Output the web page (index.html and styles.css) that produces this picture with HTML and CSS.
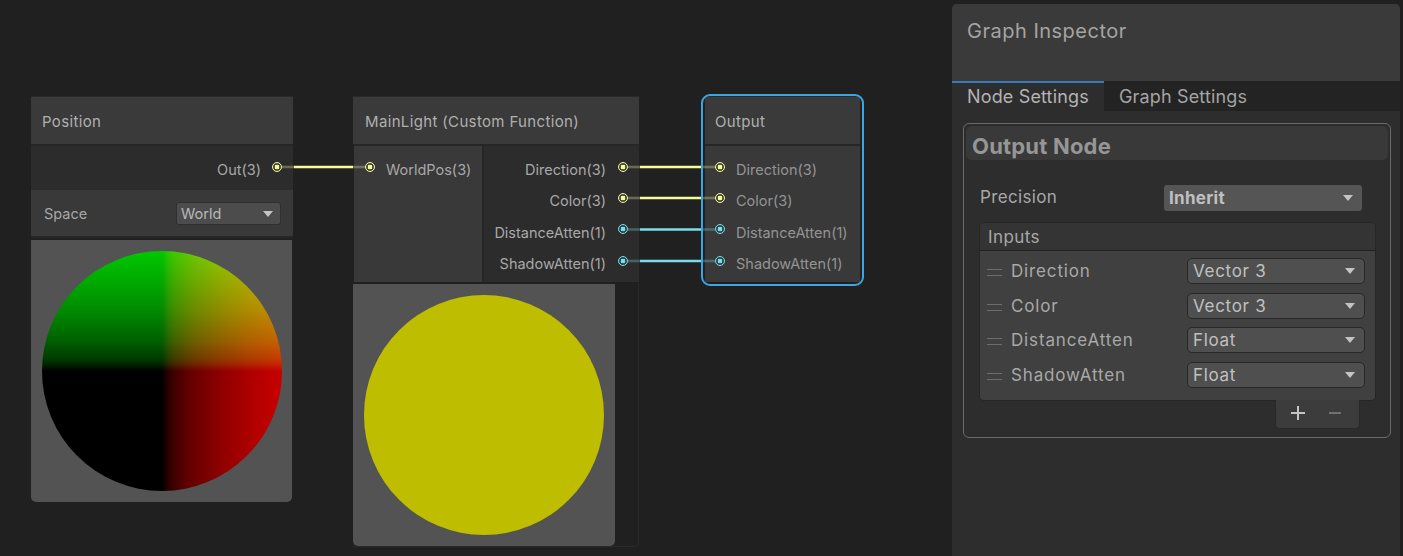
FILE: index.html
```html
<!DOCTYPE html>
<html lang="en">
<head>
    <meta charset="UTF-8">
    <title>Shader Graph</title>
    <link rel="stylesheet" href="styles.css">
</head>
<body>
    <div class="graph">
        <svg class="wires" width="952" height="556">
            <g class="wire-vec3">
                <line class="tail" x1="282" y1="167" x2="294" y2="167"/>
                <line x1="294" y1="167" x2="353" y2="167"/>
                <line class="tail" x1="353" y1="167" x2="365" y2="167"/>
                <line class="tail" x1="628" y1="167" x2="640" y2="167"/>
                <line x1="640" y1="167" x2="702" y2="167"/>
                <line class="tail" x1="702" y1="167" x2="715" y2="167"/>
                <line class="tail" x1="628" y1="198" x2="640" y2="198"/>
                <line x1="640" y1="198" x2="702" y2="198"/>
                <line class="tail" x1="702" y1="198" x2="715" y2="198"/>
            </g>
            <g class="wire-float">
                <line class="tail" x1="628" y1="229.500" x2="640" y2="229.500"/>
                <line x1="640" y1="229.500" x2="702" y2="229.500"/>
                <line class="tail" x1="702" y1="229.500" x2="715" y2="229.500"/>
                <line class="tail" x1="628" y1="261" x2="640" y2="261"/>
                <line x1="640" y1="261" x2="702" y2="261"/>
                <line class="tail" x1="702" y1="261" x2="715" y2="261"/>
            </g>
        </svg>

        <div class="node node-position">
            <div class="node-title">Position</div>
            <div class="node-ports out-only">
                <div class="ports-out">
                    <div class="port-row"><span>Out(3)</span><i class="port vec3"></i></div>
                </div>
            </div>
            <div class="node-control">
                <span>Space</span>
                <div class="node-select">World<i class="arrow"></i></div>
            </div>
            <div class="preview"><div class="ball ball-position"></div></div>
        </div>

        <div class="node node-main">
            <div class="node-title">MainLight (Custom Function)</div>
            <div class="node-ports">
                <div class="ports-in">
                    <div class="port-row"><i class="port vec3"></i><span>WorldPos(3)</span></div>
                </div>
                <div class="ports-out">
                    <div class="port-row"><span>Direction(3)</span><i class="port vec3"></i></div>
                    <div class="port-row"><span>Color(3)</span><i class="port vec3"></i></div>
                    <div class="port-row"><span>DistanceAtten(1)</span><i class="port float"></i></div>
                    <div class="port-row"><span>ShadowAtten(1)</span><i class="port float"></i></div>
                </div>
            </div>
            <div class="preview-wrap">
                <div class="preview"><div class="ball ball-color"></div></div>
            </div>
        </div>

        <div class="node node-output">
            <div class="node-title">Output</div>
            <div class="node-ports">
                <div class="ports-in">
                    <div class="port-row"><i class="port vec3"></i><span>Direction(3)</span></div>
                    <div class="port-row"><i class="port vec3"></i><span>Color(3)</span></div>
                    <div class="port-row"><i class="port float"></i><span>DistanceAtten(1)</span></div>
                    <div class="port-row"><i class="port float"></i><span>ShadowAtten(1)</span></div>
                </div>
            </div>
        </div>
    </div>

    <div class="inspector">
        <div class="inspector-title">Graph Inspector</div>
        <div class="tabs">
            <div class="tab active">Node Settings</div>
            <div class="tab">Graph Settings</div>
        </div>
        <div class="inspector-body">
            <div class="settings-box">
                <div class="settings-head">Output Node</div>
                <div class="precision">
                    <span>Precision</span>
                    <div class="select select-bold">Inherit<i class="arrow"></i></div>
                </div>
                <div class="list">
                    <div class="list-head">Inputs</div>
                    <div class="list-rows">
                        <div class="list-row">
                            <i class="handle"></i><span>Direction</span>
                            <div class="select">Vector 3<i class="arrow"></i></div>
                        </div>
                        <div class="list-row">
                            <i class="handle"></i><span>Color</span>
                            <div class="select">Vector 3<i class="arrow"></i></div>
                        </div>
                        <div class="list-row">
                            <i class="handle"></i><span>DistanceAtten</span>
                            <div class="select">Float<i class="arrow"></i></div>
                        </div>
                        <div class="list-row">
                            <i class="handle"></i><span>ShadowAtten</span>
                            <div class="select">Float<i class="arrow"></i></div>
                        </div>
                    </div>
                </div>
                <div class="list-footer">
                    <svg width="16" height="16" viewBox="0 0 16 16"><path class="icon-plus" d="M8 1v14M1 8h14"/></svg>
                    <svg width="12" height="16" viewBox="0 0 12 16"><path class="icon-minus" d="M0 8h12"/></svg>
                </div>
            </div>
        </div>
    </div>
</body>
</html>
```

FILE: styles.css
```css
body {
    margin: 0;
    width: 1403px;
    height: 556px;
    overflow: hidden;
    display: flex;
    background-color: #202020;
    font-family: Inter, "Noto Sans", sans-serif;
    color: #a8a8a8;
}

/* graph canvas */
.graph {
    position: relative;
    width: 952px;
    height: 556px;
    flex: none;
}

.wires {
    position: absolute;
    top: 0;
    left: 0;
    z-index: 2;
    pointer-events: none;
}

.wires line {
    stroke-width: 2.6;
}

.wires .tail {
    opacity: 0.3;
}

.wire-vec3 line {
    stroke: #f4fb9b;
}

.wire-float line {
    stroke: #7adcec;
}

.node {
    position: absolute;
    font-size: 14.5px;
}

.node-position {
    left: 31px;
    top: 97px;
    width: 262px;
}

.node-main {
    left: 353px;
    top: 97px;
    width: 286px;
}

.node-output {
    left: 705px;
    top: 97px;
    width: 155px;
    color: #949494;
}

.node-output::after {
    content: "";
    position: absolute;
    top: -3px;
    left: -4px;
    right: -4px;
    bottom: -4px;
    border: 2px solid #3ca5e2;
    border-radius: 9px;
    z-index: 3;
}

.node-title {
    height: 47px;
    line-height: 49px;
    padding-left: 11px;
    background-color: #3a3a3a;
    border-bottom: 2px solid #262626;
    box-shadow: 0 -1px 0 #2a2a2a;
    font-size: 15px;
    letter-spacing: 0.35px;
    color: #b0b0b0;
}

.node-main .node-title {
    padding-left: 12px;
}

.node-output .node-title {
    padding-left: 10px;
}

.node-ports {
    display: flex;
    height: 136px;
}

.out-only {
    height: 44px;
}

.ports-in {
    flex: 1;
    padding: 8px 0 0 12px;
    background-color: #393939;
}

.ports-out {
    flex: 1;
    padding: 8px 11px 0 0;
    background-color: #2c2c2c;
}

.node-main .ports-in {
    flex: none;
    width: 117px;
    padding-left: 11px;
    border-left: 1px solid #202020;
    border-right: 2px solid #262626;
}

.node-output .ports-in {
    padding-left: 10px;
}

.port-row {
    height: 31.33px;
    display: flex;
    align-items: center;
    gap: 11px;
    white-space: nowrap;
}

.ports-out .port-row {
    justify-content: flex-end;
    gap: 12px;
}

.node-position .port-row {
    gap: 11px;
}

.port {
    width: 10px;
    height: 10px;
    flex: none;
    box-sizing: border-box;
    border-radius: 50%;
    margin-bottom: 6px;
}

.port.vec3 {
    border: 1.4px solid #f4fb9b;
    background: radial-gradient(circle, #f4fb9b 0, #f4fb9b 2.1px, #46463a 2.6px);
}

.port.float {
    border: 1.4px solid #7adcec;
    background: radial-gradient(circle, #7adcec 0, #7adcec 2.1px, #2f4448 2.6px);
}

.node-control {
    height: 48px;
    box-sizing: border-box;
    padding: 1px 12px 0 13px;
    display: flex;
    align-items: center;
    justify-content: space-between;
    background-color: #393939;
    border-bottom: 2px solid #262626;
}

.node-select {
    position: relative;
    width: 105px;
    height: 23px;
    line-height: 22px;
    box-sizing: border-box;
    padding-left: 4px;
    background-color: #4c4c4c;
    border: 1px solid #2f2f2f;
    border-radius: 3px;
    color: #b8b8b8;
}

.arrow {
    position: absolute;
    top: 50%;
    right: 7px;
    margin-top: -3px;
    border-left: 5px solid transparent;
    border-right: 5px solid transparent;
    border-top: 6px solid #c4c4c4;
}

.select .arrow {
    right: 9px;
}

.preview {
    width: 262px;
    height: 262px;
    box-sizing: border-box;
    display: flex;
    align-items: center;
    justify-content: center;
    background-color: #535353;
    border-radius: 0 0 5px 5px;
}

.node-position .preview {
    width: 261px;
    margin-top: 2px;
}

.preview-wrap {
    margin-top: 2px;
    border-right: 1px solid #2a2a2a;
    border-bottom: 1px solid #2a2a2a;
    border-radius: 0 0 5px 0;
}

.ball {
    width: 240px;
    height: 240px;
    border-radius: 50%;
}

/* the ramps are bent like a gamma curve, red and green add up in the top right quarter */
.ball-position {
    background-image:
        linear-gradient(to bottom, #00c800 0, #00aa00 12.5%, #008a00 25%, #006000 37.5%, #003a00 45%, #002200 47.5%, #000 50%),
        linear-gradient(to right, #000 50%, #2a0000 52.5%, #400000 55%, #680000 62.5%, #900000 75%, #b00000 87.5%, #c80000 100%);
    background-blend-mode: screen;
}

.ball-color {
    background-color: #bfbd00;
}

/* inspector panel */
.inspector {
    width: 448px;
    height: 552px;
    margin-top: 4px;
    flex: none;
    background-color: #2d2d2d;
    border-radius: 5px 5px 0 0;
}

.inspector-title {
    height: 77px;
    box-sizing: border-box;
    padding: 15px 0 0 15px;
    background-color: #3a3a3a;
    border-radius: 5px 5px 0 0;
    font-size: 20px;
    letter-spacing: 0.5px;
    line-height: 24px;
    color: #a4a4a4;
}

.tabs {
    height: 30px;
    display: flex;
    background-color: #232323;
    font-size: 18px;
    letter-spacing: 0.15px;
    line-height: 32px;
}

.tab {
    padding-left: 15px;
    width: 137px;
    color: #a4a4a4;
}

.tab.active {
    background-color: #2d2d2d;
    box-shadow: inset 0 2px 0 #3a79bb;
    color: #b4b4b4;
}

.inspector-body {
    padding: 12px 9px 0 11px;
}

.settings-box {
    height: 315px;
    box-sizing: border-box;
    padding: 2px;
    border: 1px solid #6a6a6a;
    border-radius: 6px;
    display: flex;
    flex-direction: column;
}

.settings-head {
    height: 34px;
    box-sizing: border-box;
    padding: 5px 0 0 6px;
    line-height: 30px;
    flex: none;
    background-color: #393939;
    border-radius: 6px;
    font-size: 22px;
    letter-spacing: 0.2px;
    font-weight: 700;
    color: #969696;
}

.precision {
    height: 26px;
    margin: 25px 26px 0 14px;
    display: flex;
    align-items: center;
    justify-content: space-between;
    font-size: 17px;
    letter-spacing: 0.35px;
    color: #a8a8a8;
}

.precision span {
    margin-bottom: 3px;
}

.select {
    position: relative;
    box-sizing: border-box;
    width: 178px;
    height: 26px;
    line-height: 25px;
    padding-left: 5px;
    background-color: #4f4f4f;
    border: 1px solid #272727;
    border-radius: 5px;
    font-size: 17px;
    letter-spacing: 0.7px;
    color: #c0c0c0;
}

.select-bold {
    width: 198px;
    background-color: #555;
    border: none;
    border-radius: 3px;
    line-height: 27px;
    letter-spacing: 0.3px;
    font-weight: 700;
}

.list {
    margin: 11px 12px 0 13px;
    border: 1px solid #262626;
    border-radius: 5px;
    overflow: hidden;
}

.list-head {
    height: 27px;
    line-height: 29px;
    padding-left: 8px;
    background-color: #343434;
    border-bottom: 1px solid #222;
    font-size: 17px;
    letter-spacing: 0.4px;
    color: #a8a8a8;
}

.list-rows {
    height: 149px;
    box-sizing: border-box;
    padding: 7px 10px 0 7px;
    background-color: #404040;
}

.list-row {
    height: 34.6px;
    display: flex;
    align-items: flex-start;
    font-size: 17px;
    letter-spacing: 0.85px;
    line-height: 26px;
    color: #a8a8a8;
}

.handle {
    width: 15px;
    height: 5px;
    margin: 11px 9px 0 0;
    flex: none;
    border-top: 1px solid #6c6c6c;
    border-bottom: 1px solid #6c6c6c;
}

.list-row span {
    flex: 1;
}

.list-footer {
    width: 85px;
    height: 29px;
    margin: -1px 0 0 309px;
    box-sizing: border-box;
    display: flex;
    align-items: center;
    gap: 23px;
    padding: 0 0 2px 14px;
    background-color: #3c3c3c;
    border: 1px solid #292929;
    border-top: none;
    border-radius: 0 0 5px 5px;
}

.icon-plus {
    stroke: #c4c4c4;
    stroke-width: 2;
    fill: none;
}

.icon-minus {
    stroke: #717171;
    stroke-width: 2;
    fill: none;
}
```
